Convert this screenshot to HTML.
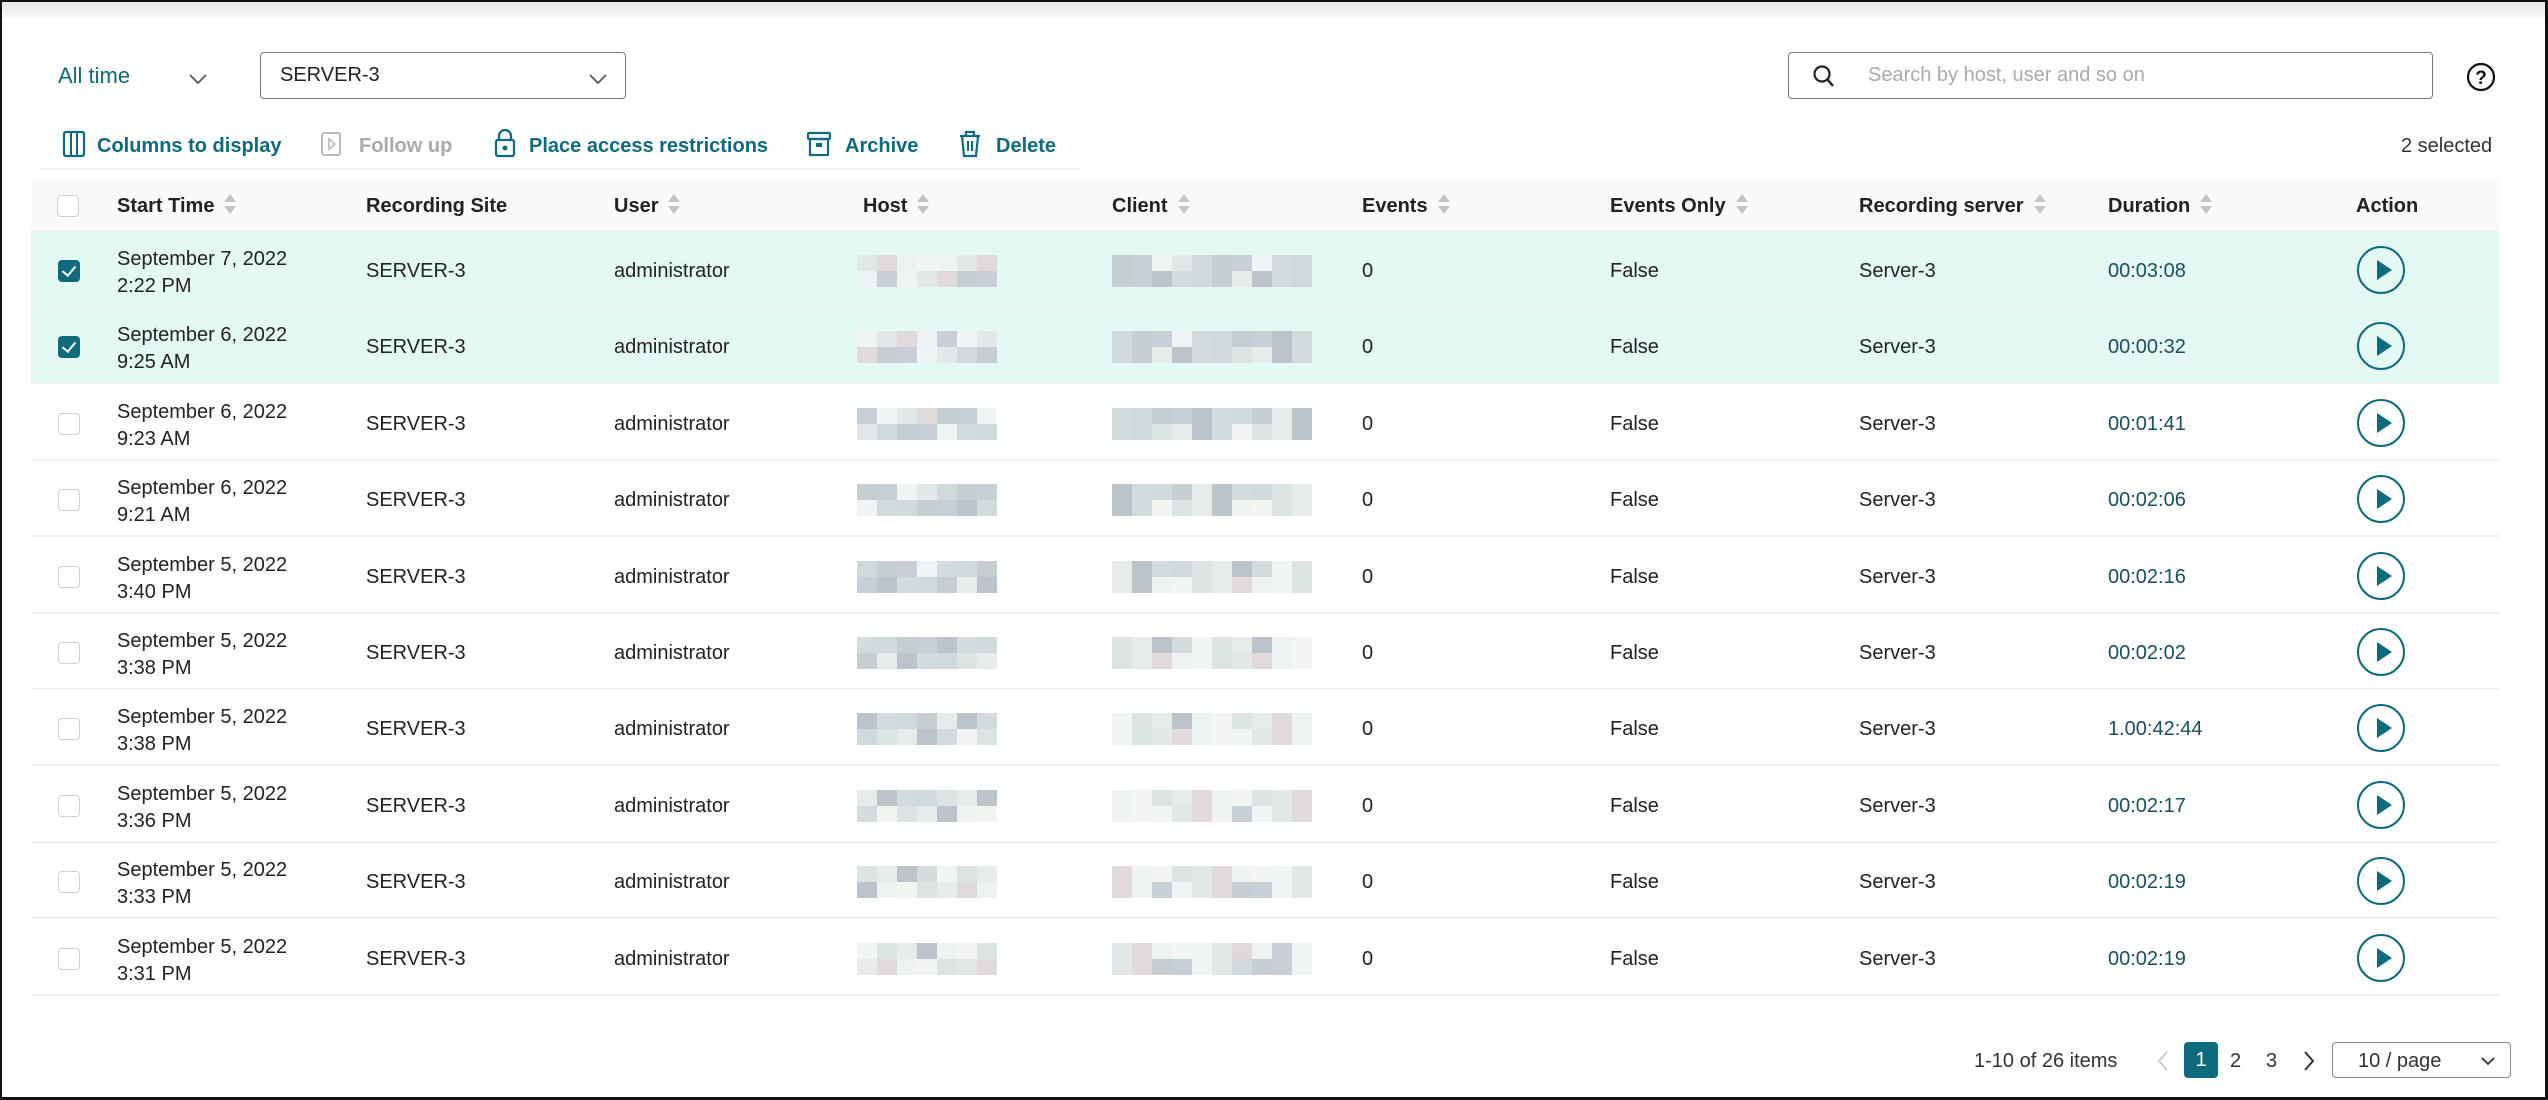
<!DOCTYPE html>
<html><head><meta charset="utf-8">
<style>
*{box-sizing:border-box;margin:0;padding:0}
body{width:2548px;height:1100px;background:#fff;font-family:"Liberation Sans",sans-serif;color:#222;position:relative;overflow:hidden}
.frame{position:absolute;left:0;top:0;width:2548px;height:1100px;border:2px solid #111;border-right-width:3px;border-bottom-width:3px}
.topband{position:absolute;left:2px;top:2px;right:3px;height:16px;background:linear-gradient(#e9e9e9,#f7f7f7)}
.a{position:absolute;white-space:nowrap}
.teal{color:#0d6b7d}
.tb{font-size:20px;color:#0d6b7d;top:135px}
.hdr{position:absolute;left:31px;top:179px;width:2468px;height:53px;background:#fafafa;border-bottom:1px solid #eee}
.hd{position:absolute;top:195px;font-size:20px;color:#222}
.sort{display:inline-block;vertical-align:middle;margin-left:10px;width:12px;height:22px;position:relative;top:-2px}
.sort:before{content:"";position:absolute;left:0;top:0;border:6px solid transparent;border-bottom:8px solid #c4c4c4;border-top:0}
.sort:after{content:"";position:absolute;left:0;top:12px;border:6px solid transparent;border-top:8px solid #c4c4c4;border-bottom:0}
.row{position:absolute;left:31px;width:2468px;height:76px;border-bottom:2px solid #f0f0f0}
.sel{background:#e5f9f4}
.c{position:absolute;font-size:20px;color:#222}
.cb{position:absolute;left:27px;top:28px;width:22px;height:22px;border:1.5px solid #d0d0d0;border-radius:4px;background:#fff}
.cb.on{background:#0d6b7d;border-color:#0d6b7d}
.cb.on:after{content:"";position:absolute;left:6px;top:2px;width:6px;height:11px;border:solid #fff;border-width:0 2px 2px 0;transform:rotate(40deg)}
.play{position:absolute;left:2326px;top:14px;width:48px;height:48px;border:2px solid #0d6b7d;border-radius:50%}
.play:after{content:"";position:absolute;left:18px;top:12px;border-left:15px solid #0d6b7d;border-top:10px solid transparent;border-bottom:10px solid transparent}
.pix{position:absolute;display:grid;grid-template-rows:16px 16px}
.pix span{display:block}
</style></head><body>
<div class="topband"></div>

<div class="a teal" style="left:58px;top:63px;font-size:22px">All time</div>
<svg class="a" style="left:188px;top:73px" width="20" height="12"><path d="M2 2 L10 10 L18 2" fill="none" stroke="#555" stroke-width="1.8"/></svg>
<div class="a" style="left:260px;top:52px;width:366px;height:47px;border:1.5px solid #777;border-radius:4px"></div>
<div class="a" style="left:280px;top:64px;font-size:20px;color:#222">SERVER-3</div>
<svg class="a" style="left:588px;top:73px" width="20" height="12"><path d="M2 2 L10 10 L18 2" fill="none" stroke="#555" stroke-width="1.8"/></svg>

<div class="a" style="left:1788px;top:52px;width:645px;height:47px;border:1.5px solid #777;border-radius:4px"></div>
<svg class="a" style="left:1812px;top:64px" width="24" height="26"><circle cx="10" cy="10" r="7.5" fill="none" stroke="#222" stroke-width="2.2"/><path d="M15 15 L21 22" stroke="#222" stroke-width="2.4"/></svg>
<div class="a" style="left:1868px;top:64px;font-size:20px;color:#aaa">Search by host, user and so on</div>
<svg class="a" style="left:2466px;top:61px" width="30" height="32"><circle cx="15" cy="16" r="13" fill="none" stroke="#111" stroke-width="2.2"/><text x="15" y="23" font-size="19" font-family="Liberation Sans" text-anchor="middle" fill="#111" font-weight="bold">?</text></svg>

<svg class="a" style="left:62px;top:130px" width="24" height="28"><rect x="2" y="2" width="20" height="24" rx="2" fill="none" stroke="#0d6b7d" stroke-width="2.2"/><path d="M9 2V26M15 2V26" stroke="#0d6b7d" stroke-width="2"/></svg>
<div class="a tb" style="left:97px;font-weight:bold">Columns to display</div>
<svg class="a" style="left:320px;top:131px" width="24" height="28"><rect x="2" y="2" width="18" height="22" rx="2" fill="none" stroke="#bbb" stroke-width="2"/><path d="M9 8L15 13L9 18Z" fill="none" stroke="#bbb" stroke-width="1.6"/></svg>
<div class="a tb" style="left:359px;color:#aaa;font-weight:bold">Follow up</div>
<svg class="a" style="left:494px;top:128px" width="22" height="30"><path d="M5 12V8a6 6 0 0 1 12 0v4" fill="none" stroke="#0d6b7d" stroke-width="2.2"/><rect x="2" y="12" width="18" height="16" rx="2" fill="none" stroke="#0d6b7d" stroke-width="2.2"/><circle cx="11" cy="20" r="2.5" fill="#0d6b7d"/></svg>
<div class="a tb" style="left:529px;font-weight:bold">Place access restrictions</div>
<svg class="a" style="left:806px;top:131px" width="26" height="26"><rect x="2" y="2" width="22" height="6" rx="1" fill="none" stroke="#0d6b7d" stroke-width="2.2"/><rect x="4" y="8" width="18" height="16" fill="none" stroke="#0d6b7d" stroke-width="2.2"/><rect x="10" y="12" width="6" height="4" fill="#0d6b7d"/></svg>
<div class="a tb" style="left:845px;font-weight:bold">Archive</div>
<svg class="a" style="left:958px;top:130px" width="24" height="28"><path d="M2 6H22M8 6V2H16V6" fill="none" stroke="#0d6b7d" stroke-width="2.2"/><path d="M4 6L6 26H18L20 6" fill="none" stroke="#0d6b7d" stroke-width="2.2"/><path d="M10 11V21M14 11V21" stroke="#0d6b7d" stroke-width="2"/></svg>
<div class="a tb" style="left:996px;font-weight:bold">Delete</div>
<div class="a" style="left:2401px;top:135px;font-size:20px;color:#333">2 selected</div>
<div class="a" style="left:40px;top:168px;width:1040px;height:2px;background:#f3f3f3"></div>

<div class="hdr"><div class="cb" style="left:26px;top:16px"></div></div>
<div class="hd" style="left:117px;font-weight:bold">Start Time<span class="sort"></span></div>
<div class="hd" style="left:366px;font-weight:bold">Recording Site</div>
<div class="hd" style="left:614px;font-weight:bold">User<span class="sort"></span></div>
<div class="hd" style="left:863px;font-weight:bold">Host<span class="sort"></span></div>
<div class="hd" style="left:1112px;font-weight:bold">Client<span class="sort"></span></div>
<div class="hd" style="left:1362px;font-weight:bold">Events<span class="sort"></span></div>
<div class="hd" style="left:1610px;font-weight:bold">Events Only<span class="sort"></span></div>
<div class="hd" style="left:1859px;font-weight:bold">Recording server<span class="sort"></span></div>
<div class="hd" style="left:2108px;font-weight:bold">Duration<span class="sort"></span></div>
<div class="hd" style="left:2356px;font-weight:bold">Action</div>

<div id="rows"></div>

<div class="a" style="left:1974px;top:1050px;font-size:20px;color:#333">1-10 of 26 items</div>
<svg class="a" style="left:2156px;top:1050px" width="14" height="22"><path d="M11 2L3 11L11 20" fill="none" stroke="#ccc" stroke-width="2"/></svg>
<div class="a" style="left:2184px;top:1042px;width:34px;height:36px;background:#0d6b7d;border-radius:4px;color:#fff;font-size:20px;text-align:center;line-height:36px">1</div>
<div class="a" style="left:2230px;top:1050px;font-size:20px;color:#333">2</div>
<div class="a" style="left:2266px;top:1050px;font-size:20px;color:#333">3</div>
<svg class="a" style="left:2302px;top:1050px" width="14" height="22"><path d="M3 2L11 11L3 20" fill="none" stroke="#333" stroke-width="2"/></svg>
<div class="a" style="left:2332px;top:1042px;width:179px;height:36px;border:1.5px solid #888;border-radius:4px"></div>
<div class="a" style="left:2358px;top:1050px;font-size:20px;color:#333">10 / page</div>
<svg class="a" style="left:2480px;top:1056px" width="16" height="10"><path d="M2 2L8 8L14 2" fill="none" stroke="#333" stroke-width="1.8"/></svg>

<div class="frame"></div>
<script>
(function(){
var data=[
["September 7, 2022","2:22 PM","00:03:08",1],
["September 6, 2022","9:25 AM","00:00:32",1],
["September 6, 2022","9:23 AM","00:01:41",0],
["September 6, 2022","9:21 AM","00:02:06",0],
["September 5, 2022","3:40 PM","00:02:16",0],
["September 5, 2022","3:38 PM","00:02:02",0],
["September 5, 2022","3:38 PM","1.00:42:44",0],
["September 5, 2022","3:36 PM","00:02:17",0],
["September 5, 2022","3:33 PM","00:02:19",0],
["September 5, 2022","3:31 PM","00:02:19",0]];
var pal=["#e2e8e8","#d3dbdc","#eef2f2","#c6ced2","#dbe3e3","#f1f4f4","#bcc3ca","#e0dada","#d0d9db","#f2f5f2","#c8cfd6","#e7ecea"];
function pix(x,cols,seed){var h='<div class="pix" style="left:'+x+'px;top:23px;grid-template-columns:repeat('+cols+',20px)">';
for(var i=0;i<cols*2;i++){h+='<span style="background:'+pal[(i*7+seed*5+(i>>2))%pal.length]+'"></span>';}return h+'</div>';}
var out='';
for(var r=0;r<10;r++){var d=data[r],ty=Math.round(232+r*76.4);
out+='<div class="row'+(d[3]?' sel':'')+'" style="top:'+ty+'px">'+
'<div class="cb'+(d[3]?' on':'')+'"></div>'+
'<div class="c" style="left:86px;top:14px;line-height:27px">'+d[0]+'<br>'+d[1]+'</div>'+
'<div class="c" style="left:335px;top:28px">SERVER-3</div>'+
'<div class="c" style="left:583px;top:28px">administrator</div>'+
pix(826,7,r)+pix(1081,10,r+3)+
'<div class="c" style="left:1331px;top:28px">0</div>'+
'<div class="c" style="left:1579px;top:28px">False</div>'+
'<div class="c" style="left:1828px;top:28px">Server-3</div>'+
'<div class="c" style="left:2077px;top:28px;color:#1b4f5a">'+d[2]+'</div>'+
'<div class="play"></div></div>';}
document.getElementById('rows').innerHTML=out;
})();
</script>
</body></html>
